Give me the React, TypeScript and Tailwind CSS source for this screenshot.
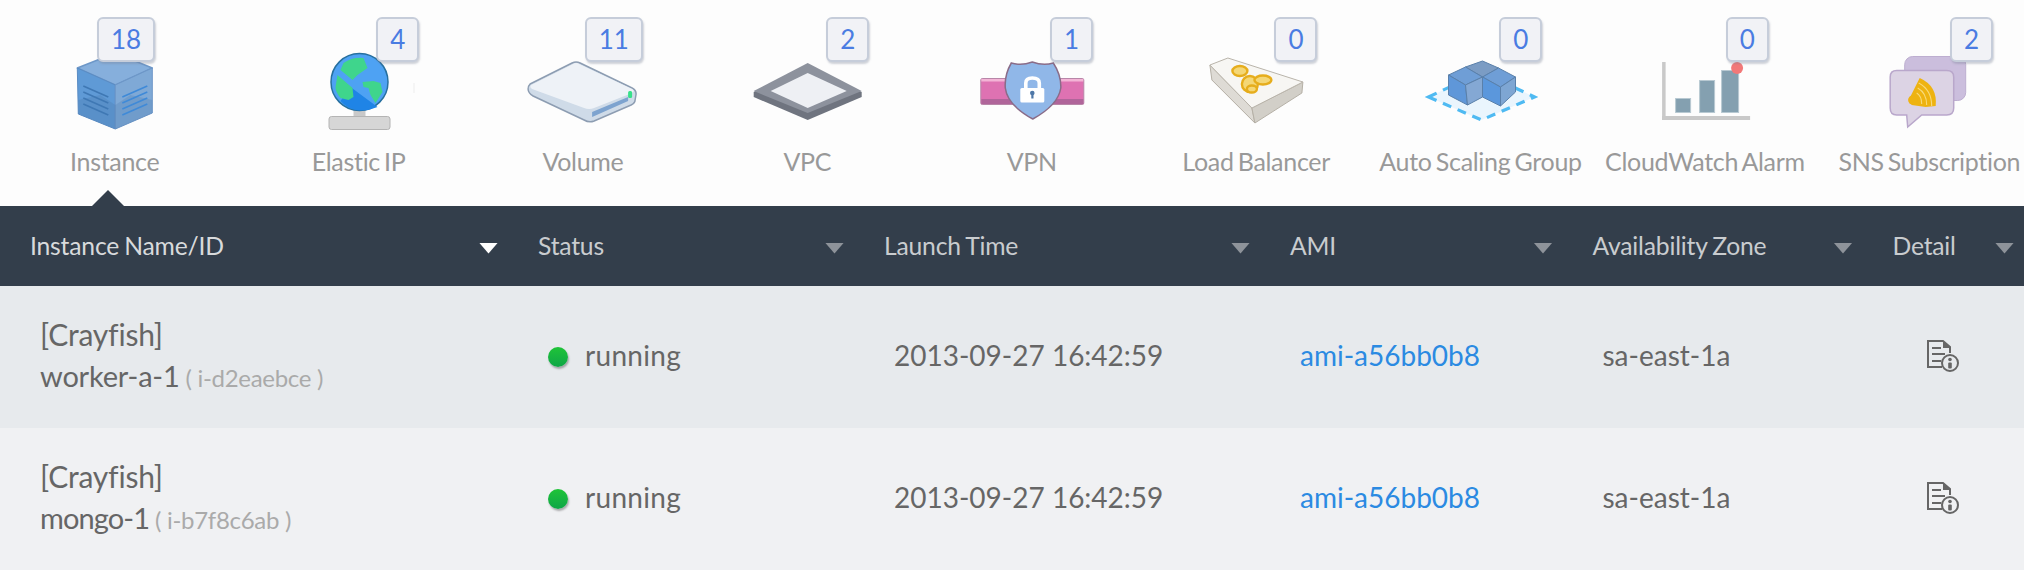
import React from "react";

function Icon({ c, children }: { c: number; children: React.ReactNode }) {
  return (
    <svg width={140} height={80} viewBox={`${c - 70} 50 140 80`} className="block">
      {children}
    </svg>
  );
}

const Instance = () => (
  <Icon c={114.7}>
    <polygon points="77,68 115,53 152,68 115,85" fill="#86afdc" stroke="#6d97c8" strokeWidth="1.5" strokeLinejoin="round" />
    <polygon points="77,68 115,85 115,129 78,114" fill="#5f9ad6" stroke="#5a8cc4" strokeWidth="1" strokeLinejoin="round" />
    <polygon points="152,68 115,85 115,129 152,113" fill="#7fa9d6" stroke="#6d97c8" strokeWidth="1" strokeLinejoin="round" />
    <polygon points="78,100 100,95 115,105 115,129 78,114" fill="#4f7fb3" opacity="0.35" />
    <polygon points="115,105 130,95 152,100 152,113 115,129" fill="#4f7fb3" opacity="0.3" />
    <g stroke="#3f78b4" strokeWidth="1.6">
      <line x1="83" y1="86" x2="108" y2="97" />
      <line x1="83" y1="92" x2="108" y2="103" />
      <line x1="83" y1="98" x2="108" y2="109" />
      <line x1="83" y1="104" x2="108" y2="115" />
    </g>
    <g stroke="#3f8ad8" strokeWidth="1.6">
      <line x1="122" y1="97" x2="147" y2="86" />
      <line x1="122" y1="103" x2="147" y2="92" />
      <line x1="122" y1="109" x2="147" y2="98" />
      <line x1="122" y1="115" x2="147" y2="104" />
    </g>
  </Icon>
);

const ElasticIp = () => (
  <Icon c={358.5}>
    <rect x="353" y="109" width="12" height="8" fill="#c9c9c9" />
    <rect x="328.5" y="116.5" width="61" height="13" rx="2.5" fill="#d6d6d6" stroke="#b4b4b4" />
    <circle cx="359" cy="82" r="28.5" fill="#4ea2f3" stroke="#27709f" strokeWidth="1.5" />
    <path d="M350 87 L377 107 Q368 111 359 110.5 Q348 110 340 101 Z" fill="#1f84e6" />
    <path d="M343 63 Q352 57 363 58 L367 68 L357 75 L352 80 L340 70 Z" fill="#3fd58c" />
    <path d="M337 75 L352 88 L353 97 L348 100 L340 98 Q335 92 335 87 Z" fill="#3fd58c" />
    <path d="M362 82 L373 81 L380 83 L382 92 L375 103 L370 95 L368 88 L363 87 Z" fill="#3fd58c" />
    <rect x="413" y="83" width="1" height="10" fill="#eeeeee" />
  </Icon>
);

const Volume = () => (
  <Icon c={582.9}>
    <path d="M530 84 L572 63 Q576 61 580 63 L632 88 Q636 90 636 94 L635 100 Q635 103 631 105 L594 121 Q589 123 584 120 L533 96 Q528 93 528 89 Q528 86 530 84 Z" fill="#cfdbe8" stroke="#8d9db2" strokeWidth="1.5" />
    <path d="M531 85 L573 64 Q576 62 579 64 L632 89 Q635 91 632 93 L594 108 Q589 110 584 108 L532 89 Q529 87 531 85 Z" fill="#eef2f7" />
    <path d="M592 117 L628 101 L628 97 L592 112 Z" fill="#7da3cf" />
    <rect x="628" y="91" width="4" height="7" rx="1.5" fill="#38e08a" />
  </Icon>
);

const Vpc = () => (
  <Icon c={807.3}>
    <polygon points="754,92 808,64 862,92 862,97 808,120 754,97" fill="#6f747f" />
    <polygon points="754,91 808,63 862,91 808,113" fill="#8d929d" />
    <polygon points="771,91 808,73 847,91 808,108" fill="#eef0f4" />
  </Icon>
);

const Vpn = () => (
  <Icon c={1031.7}>
    <rect x="980.5" y="78.5" width="103" height="26" rx="1.5" fill="#de72b2" stroke="#b886a8" />
    <rect x="981" y="79" width="102" height="2.5" fill="#f3b4d6" />
    <rect x="981" y="99" width="102" height="5" fill="#b0659a" />
    <path d="M1011 63 Q1021 66 1032 62 Q1043 66 1053 63 Q1061 75 1060.5 88 Q1058 105 1032.5 119 Q1007 105 1005 88 Q1004 75 1011 63 Z" fill="#90b7e8" stroke="#8a6c88" strokeWidth="1.5" />
    <path d="M1025.5 89 V83 Q1025.5 78 1032 78 Q1039 78 1039 83 V89" fill="none" stroke="#ffffff" strokeWidth="3.6" />
    <rect x="1020" y="88" width="24" height="14.5" rx="1.5" fill="#ffffff" />
    <circle cx="1032" cy="93" r="2.3" fill="#4f78a8" />
    <rect x="1031" y="93.5" width="2.2" height="5" fill="#4f78a8" />
  </Icon>
);

const LoadBalancer = () => (
  <Icon c={1256.1}>
    <polygon points="1210,65 1252,108 1255,123 1212,80" fill="#dedbd5" stroke="#b5b0a6" strokeLinejoin="round" />
    <polygon points="1252,108 1303,82 1302,93 1255,123" fill="#d2cfc8" stroke="#b5b0a6" strokeLinejoin="round" />
    <polygon points="1210,65 1228,58 1303,82 1252,108" fill="#f7f6f3" stroke="#b9b4aa" strokeLinejoin="round" />
    <g fill="#f4d777" stroke="#e6ad1c" strokeWidth="2.4" strokeLinejoin="round">
      <ellipse cx="1240" cy="71" rx="7.5" ry="5" />
      <ellipse cx="1250" cy="84" rx="8" ry="8" />
      <ellipse cx="1263" cy="80" rx="8.5" ry="4.5" />
      <ellipse cx="1252" cy="89" rx="5" ry="3.5" />
    </g>
  </Icon>
);

const AutoScaling = () => (
  <Icon c={1480.5}>
    <polygon points="1428,97 1481,72 1534,97 1481,120" fill="#eaf5fd" stroke="#4fbaf2" strokeWidth="3.2" strokeDasharray="9 7" />
    <g stroke="#5a80aa" strokeWidth="1" strokeLinejoin="round">
      <polygon points="1465,67 1482,61 1498,68 1482,77" fill="#7b9cc4" />
      <polygon points="1448,75 1465,67 1482,77 1465,85" fill="#6f9ed6" />
      <polygon points="1498,68 1515,77 1500,87 1482,77" fill="#6f9ed6" />
      <polygon points="1448,75 1465,85 1467,105 1448,95" fill="#5f97d9" />
      <polygon points="1465,85 1482,77 1482,97 1467,105" fill="#84a8d4" />
      <polygon points="1482,77 1500,87 1500,106 1482,97" fill="#5b97dc" />
      <polygon points="1500,87 1515,77 1515,92 1500,106" fill="#7ea6d3" />
    </g>
  </Icon>
);

const CloudWatch = () => (
  <Icon c={1704.9}>
    <rect x="1662" y="62" width="3.5" height="58" fill="#c9c9c9" />
    <rect x="1662" y="116" width="88" height="4" fill="#c9c9c9" />
    <g fill="#84a0b0" stroke="#b8c9d2">
      <rect x="1675.5" y="98.5" width="15" height="14" />
      <rect x="1699.5" y="80.5" width="15" height="32" />
      <rect x="1721.5" y="70.5" width="17" height="42" />
    </g>
    <circle cx="1737" cy="68" r="6" fill="#f27878" />
  </Icon>
);

const Sns = () => (
  <Icon c={1929.3}>
    <rect x="1905" y="56.5" width="61" height="44" rx="8" fill="#cbbedd" stroke="#bdaed0" />
    <path d="M1897 70.5 H1947 Q1954 70.5 1954 77 V108 Q1954 115 1947 115 H1922 L1908 127 L1907 115 H1897 Q1890.5 115 1890.5 108 V77 Q1890.5 70.5 1897 70.5 Z" fill="#dcd3e4" stroke="#b9a7cb" strokeWidth="1.5" />
    <path d="M1920 78 Q1938 86 1936 106 L1926 107 L1912 105 L1909 100 Z" fill="#eeb311" />
    <circle cx="1913" cy="100" r="4.6" fill="#eeb311" />
    <g fill="none" stroke="#f8da7a" strokeWidth="1.1">
      <path d="M1917 93 Q1922 96 1922 104" />
      <path d="M1918 88 Q1927 93 1927 105" />
      <path d="M1919 83 Q1932 90 1932 106" />
    </g>
  </Icon>
);

type Item = { label: string; count: number; badgeLeft: number; badgeW: string; icon: React.ReactNode };

const badge2 = "w-[58px]";
const badge1 = "w-[43px]";

const first: Item = { label: "Instance", count: 18, badgeLeft: 97, badgeW: badge2, icon: <Instance /> };
const items: Item[] = [
  { label: "Elastic IP", count: 4, badgeLeft: 130, badgeW: badge1, icon: <ElasticIp /> },
  { label: "Volume", count: 11, badgeLeft: 114, badgeW: badge2, icon: <Volume /> },
  { label: "VPC", count: 2, badgeLeft: 131, badgeW: badge1, icon: <Vpc /> },
  { label: "VPN", count: 1, badgeLeft: 130.5, badgeW: badge1, icon: <Vpn /> },
  { label: "Load Balancer", count: 0, badgeLeft: 130.5, badgeW: badge1, icon: <LoadBalancer /> },
  { label: "Auto Scaling Group", count: 0, badgeLeft: 131, badgeW: badge1, icon: <AutoScaling /> },
  { label: "CloudWatch Alarm", count: 0, badgeLeft: 133, badgeW: badge1, icon: <CloudWatch /> },
  { label: "SNS Subscription", count: 2, badgeLeft: 133, badgeW: badge1, icon: <Sns /> },
];

function NavItem({ item, className }: { item: Item; className: string }) {
  return (
    <div className={`relative flex shrink-0 flex-col items-center pt-[50px] ${className}`}>
      {item.icon}
      <div className="mt-[17px] whitespace-nowrap text-[25px] leading-[28px] tracking-[-0.3px] text-[#999999] [word-spacing:-2px]">{item.label}</div>
      <div
        className={`absolute top-[17px] flex h-[45px] items-center justify-center rounded-[6px] border-2 border-[#c6cdda] bg-[#f1f2f6] text-[26px] text-[#4a7ce2] shadow-[1px_2px_2px_rgba(120,130,150,0.35)] ${item.badgeW}`}
        style={{ left: item.badgeLeft }}
      >
        {item.count}
      </div>
    </div>
  );
}

const headers = [
  { label: "Instance Name/ID", active: true },
  { label: "Status" },
  { label: "Launch Time" },
  { label: "AMI" },
  { label: "Availability Zone" },
  { label: "Detail" },
];

const rows = [
  { name: "worker-a-1", id: "i-d2eaebce", nameClass: "tracking-[-0.2px]" },
  { name: "mongo-1", id: "i-b7f8c6ab", nameClass: "tracking-[-0.9px]" },
];

const gridCols = "grid grid-cols-[508px_346px_406px_302.5px_300px_161.5px]";

function DetailIcon() {
  return (
    <svg width={32} height={33} viewBox="0 0 32 33" fill="none" className="block">
      <path d="M15 27 H1 V1 H16 L23 7 V13" stroke="#666" strokeWidth="2" />
      <path d="M16 1 L24 8 H16 Z" fill="#666" />
      <path d="M5 8 H14 M5 14 H18 M5 21 H14" stroke="#666" strokeWidth="2" />
      <circle cx="23" cy="23" r="8" fill="none" stroke="#666" strokeWidth="2" />
      <circle cx="23" cy="19.5" r="1.8" fill="#666" />
      <rect x="21.2" y="22.5" width="3.6" height="6" rx="1" fill="#666" />
    </svg>
  );
}

function Row({ row, bg }: { row: (typeof rows)[number]; bg: string }) {
  return (
    <div className={`${gridCols} h-[142px] ${bg} text-[28px] text-[#666666]`}>
      <div className="flex flex-col justify-center pl-10 pb-[2px] text-[29px]">
        <div className="text-[30px] leading-[42px] tracking-[-0.2px]">[Crayfish]</div>
        <div className="leading-[42px]">
          <span className={row.nameClass}>{row.name}</span>
          <span className="ml-[6px] text-[24px] tracking-[-0.3px] text-[#aaaaaa]">( {row.id} )</span>
        </div>
      </div>
      <div className="flex items-center pl-10 pb-[4px]">
        <span className="mr-[17px] mt-[4px] h-5 w-5 rounded-full bg-gradient-to-b from-[#1fc437] to-[#0ea646] shadow-[1px_2px_2px_rgba(0,0,0,0.3)]" />
        <span className="tracking-[0.3px]">running</span>
      </div>
      <div className="flex items-center pl-10 pb-[4px]">2013-09-27 16:42:59</div>
      <div className="flex items-center pl-10 pb-[4px] text-[#2b8ae2]">ami-a56bb0b8</div>
      <div className="flex items-center pl-10 pb-[4px]">sa-east-1a</div>
      <div className="flex items-center justify-center pb-[2px]">
        <DetailIcon />
      </div>
    </div>
  );
}

export default function App() {
  return (
    <div className="h-[570px] w-[2024px] overflow-hidden bg-[#fdfdfd] font-['Lato','Liberation_Sans',sans-serif]">
      <div className="flex h-[206px]">
        <div className="relative mr-[17px] shrink-0">
          <NavItem item={first} className="w-[229.4px]" />
          <div className="absolute left-[92px] top-[190px] h-4 w-8 bg-[#333e4b] [clip-path:polygon(50%_0,100%_100%,0_100%)]" />
        </div>
        {items.map((item) => (
          <NavItem key={item.label} item={item} className="w-[224.4px]" />
        ))}
      </div>
      <div className={`${gridCols} h-[80px] bg-[#333e4b] text-[24.7px] tracking-[-0.2px] [word-spacing:-1px]`}>
        {headers.map((h) => (
          <div key={h.label} className="flex items-center justify-between pl-[30px] pr-[10px]">
            <span className={h.active ? "text-[#d8dadc]" : "text-[#c9cccf]"}>{h.label}</span>
            <span
              className={`mt-[4px] h-[11px] w-[19px] [clip-path:polygon(0_0,100%_0,50%_100%)] ${h.active ? "bg-white" : "bg-[#8e939a]"}`}
            />
          </div>
        ))}
      </div>
      <Row row={rows[0]} bg="bg-[#e7eaed]" />
      <Row row={rows[1]} bg="bg-[#f0f1f3]" />
    </div>
  );
}
